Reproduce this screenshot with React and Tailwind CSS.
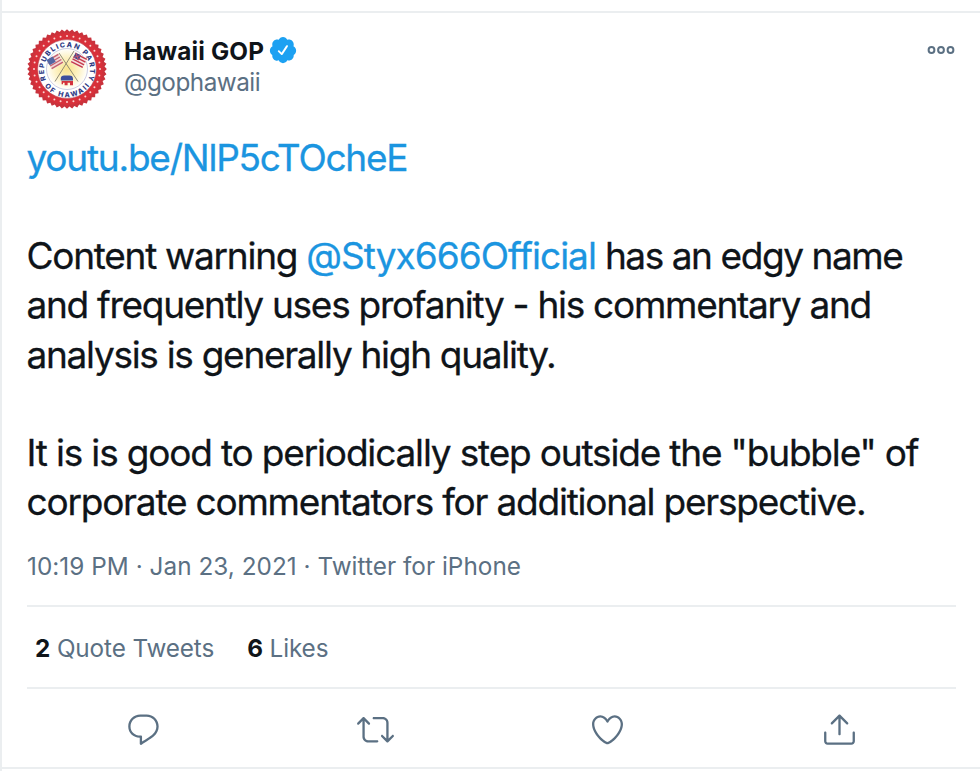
const REPLY =
  'M14.046 2.242l-4.148-.01h-.002c-4.374 0-7.8 3.427-7.8 7.802 0 4.098 3.186 7.206 7.465 7.37v3.828c0 .108.044.286.12.403.142.225.384.347.632.347.138 0 .277-.038.402-.118.264-.168 6.473-4.14 8.088-5.506 1.902-1.61 3.04-3.97 3.043-6.312v-.017c-.006-4.367-3.43-7.787-7.8-7.788zm3.787 12.972c-1.134.96-4.862 3.405-6.772 4.643V16.67c0-.414-.335-.75-.75-.75h-.396c-3.66 0-6.318-2.476-6.318-5.886 0-3.534 2.768-6.302 6.3-6.302l4.147.01h.002c3.532 0 6.3 2.766 6.302 6.296-.003 1.91-.942 3.844-2.514 5.176z';
const RETWEET =
  'M23.77 15.67c-.292-.293-.767-.293-1.06 0l-2.22 2.22V7.65c0-2.068-1.683-3.75-3.75-3.75h-5.85c-.414 0-.75.336-.75.75s.336.75.75.75h5.85c1.24 0 2.25 1.01 2.25 2.25v10.24l-2.22-2.22c-.293-.293-.768-.293-1.06 0s-.294.768 0 1.06l3.5 3.5c.145.147.337.22.53.22s.383-.072.53-.22l3.5-3.5c.294-.292.294-.767 0-1.06zm-10.66 3.28H7.26c-1.24 0-2.25-1.01-2.25-2.25V6.46l2.22 2.22c.148.147.34.22.532.22s.384-.073.53-.22c.293-.293.293-.768 0-1.06l-3.5-3.5c-.293-.294-.768-.294-1.06 0l-3.5 3.5c-.294.292-.294.767 0 1.06s.767.293 1.06 0l2.22-2.22V16.7c0 2.068 1.683 3.75 3.75 3.75h5.85c.414 0 .75-.336.75-.75s-.337-.75-.75-.75z';
const LIKE =
  'M12 21.638h-.014C9.403 21.59 1.95 14.856 1.95 8.478c0-3.064 2.525-5.754 5.403-5.754 2.29 0 3.83 1.58 4.646 2.73.814-1.148 2.354-2.73 4.645-2.73 2.88 0 5.404 2.69 5.404 5.755 0 6.376-7.454 13.11-10.037 13.157H12zM7.354 4.225c-2.08 0-3.903 1.988-3.903 4.255 0 5.74 7.034 11.596 8.55 11.658 1.518-.062 8.55-5.917 8.55-11.658 0-2.267-1.823-4.255-3.903-4.255-2.528 0-3.94 2.936-3.952 2.965-.23.562-1.156.562-1.387 0-.014-.03-1.425-2.965-3.954-2.965z';
const SHARE =
  'M17.53 7.47l-5-5c-.293-.293-.768-.293-1.06 0l-5 5c-.294.293-.294.768 0 1.06s.767.294 1.06 0l3.72-3.72V15c0 .414.336.75.75.75s.75-.336.75-.75V4.81l3.72 3.72c.146.147.338.22.53.22s.384-.072.53-.22c.293-.293.293-.767 0-1.06zM19.708 21.944H4.292C3.028 21.944 2 20.916 2 19.652V14c0-.414.336-.75.75-.75s.75.336.75.75v5.652c0 .437.355.792.792.792h15.416c.437 0 .792-.355.792-.792V14c0-.414.336-.75.75-.75s.75.336.75.75v5.652c0 1.264-1.028 2.292-2.292 2.292z';
const VERIFIED =
  'M22.5 12.5c0-1.58-.875-2.95-2.148-3.6.154-.435.238-.905.238-1.4 0-2.21-1.71-3.998-3.818-3.998-.47 0-.92.084-1.336.25C14.818 2.415 13.51 1.5 12 1.5s-2.816.917-3.437 2.25c-.415-.165-.866-.25-1.336-.25-2.11 0-3.818 1.79-3.818 4 0 .494.083.964.237 1.4-1.272.65-2.147 2.018-2.147 3.6 0 1.495.782 2.798 1.942 3.486-.02.17-.032.34-.032.514 0 2.21 1.708 4 3.818 4 .47 0 .92-.086 1.335-.25.62 1.334 1.926 2.25 3.437 2.25 1.512 0 2.818-.916 3.437-2.25.415.163.865.248 1.336.248 2.11 0 3.818-1.79 3.818-4 0-.174-.012-.344-.033-.513 1.158-.687 1.943-1.99 1.943-3.484z';

function Seal() {
  const teeth = Array.from({ length: 96 }, (_, i) => {
    const a = (i * Math.PI) / 48;
    const r = i % 2 ? 37.6 : 39.8;
    return `${(40 + r * Math.cos(a)).toFixed(2)},${(40 + r * Math.sin(a)).toFixed(2)}`;
  }).join(' ');
  const stars = Array.from({ length: 32 }, (_, i) => {
    const a = (i * Math.PI) / 16;
    return [40 + 33 * Math.cos(a), 40 + 33 * Math.sin(a)];
  });
  return (
    <svg viewBox="0 0 80 80" className="size-20 shrink-0">
      <defs>
        <radialGradient id="glow">
          <stop offset="0" stopColor="#f9e38c" />
          <stop offset="0.6" stopColor="#fdf3c8" />
          <stop offset="1" stopColor="#ffffff" />
        </radialGradient>
        <path id="arcTop" d="M19 50.5 A23 23 0 1 1 61 50.5" />
        <path id="arcBottom" d="M15.5 54 A28.2 28.2 0 0 0 64.5 54" />
      </defs>
      <polygon points={teeth} fill="#c9323c" />
      <circle cx="40" cy="40" r="36" fill="#d8303a" />
      {stars.map(([x, y], i) => (
        <circle key={i} cx={x} cy={y} r="1" fill="#fbd3d0" />
      ))}
      <circle cx="40" cy="40" r="29.4" fill="#fff" stroke="#b64a55" strokeWidth="0.6" />
      <circle cx="40" cy="40" r="20.5" fill="url(#glow)" stroke="#a9abcb" strokeWidth="0.6" />
      <g fill="#2f3c86" fontFamily="Inter, sans-serif" fontWeight="800" fontSize="7">
        <text textAnchor="middle">
          <textPath href="#arcTop" startOffset="50%" textLength="92">REPUBLICAN PARTY</textPath>
        </text>
        <text textAnchor="middle">
          <textPath href="#arcBottom" startOffset="50%" textLength="52">OF HAWAII</textPath>
        </text>
      </g>
      <path d="M32 24L51 52.5M47 22L28 52.5" stroke="#85806b" strokeWidth="0.9" />
      <g transform="rotate(-30 28 32.5)">
        <rect x="21.5" y="27" width="13" height="11" fill="#f0d6d8" />
        <path d="M21.5 28H34.5M21.5 31H34.5M21.5 34H34.5M21.5 37H34.5" stroke="#c4606e" strokeWidth="1.3" />
        <rect x="21.5" y="27" width="7" height="6" fill="#5366a3" />
      </g>
      <g transform="rotate(27 52 31.5)">
        <rect x="45.5" y="26" width="13" height="11" fill="#f6e2e2" />
        <path d="M45.5 27H58.5M45.5 30H58.5M45.5 33H58.5M45.5 36H58.5" stroke="#c63b4d" strokeWidth="1.4" />
        <rect x="45.5" y="26" width="6" height="5.5" fill="#4b4b8c" />
        <path d="M45.5 26L51.5 31.5M51.5 26L45.5 31.5" stroke="#d2566a" strokeWidth="0.9" />
      </g>
      <path d="M33.8 51.6V49.6Q33.8 46.4 37.2 46.4H42.4Q46 46.4 46 49.8V51.6Z" fill="#3d4f9d" />
      <path d="M34.6 52H46V56.2H43V53.8H40.6V56.2H37.6V53.8H36V55.2H34.6Z" fill="#d3303c" />
    </svg>
  );
}

function Action({ d }) {
  return (
    <div className="flex flex-1 justify-center">
      <svg viewBox="0 0 24 24" className="size-[37px] overflow-visible" fill="#5b7083">
        <path d={d} />
      </svg>
    </div>
  );
}

export default function App() {
  return (
    <div className="h-[771px] w-[980px] overflow-hidden border-l-2 border-[#ebeef0] bg-white pt-[11px] font-['Inter',sans-serif] text-[#0f1419]">
      <article className="h-[758px] border-y-2 border-[#ebeef0] pr-6 pl-[25px]">
        <header className="flex pt-4">
          <Seal />
          <div className="flex-1 pt-[7px] pl-[17px]">
            <div className="flex h-[30px] items-center">
              <span className="text-[24.3px] font-bold tracking-[0.15px]">Hawaii GOP</span>
              <svg viewBox="0 0 24 24" className="mb-0.5 ml-[3.5px] size-[30px]">
                <path d={VERIFIED} fill="#1da1f2" />
                <path d="M8.6 12.9L11 15.3L15.2 8.9" fill="none" stroke="#fff" strokeWidth="1.5" strokeLinecap="round" strokeLinejoin="round" />
              </svg>
            </div>
            <div className="text-[24.3px] leading-8 tracking-[-0.5px] text-[#5b7083]">@gophawaii</div>
          </div>
          <svg viewBox="0 0 28 10" className="mt-4 mr-px h-2.5 w-7" fill="none" stroke="#5b7083" strokeWidth="2">
            <circle cx="4.5" cy="5" r="2.9" />
            <circle cx="14" cy="5" r="2.9" />
            <circle cx="23.5" cy="5" r="2.9" />
          </svg>
        </header>

        <div className="-ml-[0.5px] mt-6 text-[37px] leading-[49.15px] whitespace-nowrap [-webkit-text-stroke:0.3px]">
          <p className="tracking-[-1.23px] text-[#1b95e0]">youtu.be/NlP5cTOcheE</p>
          <p className="mt-[49.15px] tracking-[-1.27px]">
            Content warning <span className="tracking-[-0.97px] text-[#1b95e0]">@Styx666Official</span>
            <span className="tracking-[-1.43px]"> has an edgy name</span>
          </p>
          <p className="tracking-[-1.28px]">and frequently uses profanity - his commentary and</p>
          <p className="tracking-[-1.29px]">analysis is generally high quality.</p>
          <p className="mt-[49.15px] tracking-[-1.17px]">It is is good to periodically step outside the "bubble" of</p>
          <p className="tracking-[-1.21px]">corporate commentators for additional perspective.</p>
        </div>

        <div className="mt-[22px] h-[59px] border-b-2 border-[#ebeef0] text-[24.3px] leading-[36px] tracking-[0.04px] whitespace-nowrap text-[#5b7083]">
          10:19 PM · Jan 23, 2021 · Twitter for iPhone
        </div>

        <div className="flex h-[82px] items-center gap-[33px] border-b-2 border-[#ebeef0] pt-px pl-2 text-[24.3px] tracking-[-0.12px] text-[#5b7083]">
          <span><b className="font-bold text-[#0f1419]">2</b> Quote Tweets</span>
          <span><b className="font-bold text-[#0f1419]">6</b> Likes</span>
        </div>

        <div className="flex pt-[21.5px]">
          <Action d={REPLY} />
          <Action d={RETWEET} />
          <Action d={LIKE} />
          <Action d={SHARE} />
        </div>
      </article>
    </div>
  );
}
